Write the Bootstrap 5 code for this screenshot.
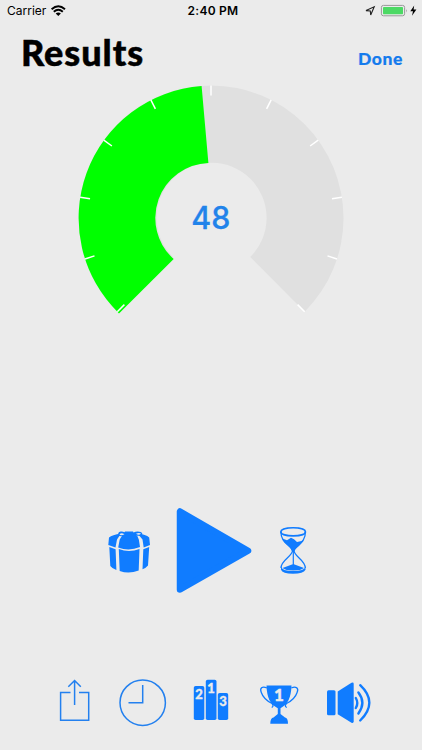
<!DOCTYPE html>
<html lang="en">
<head>
<meta charset="utf-8">
<meta name="viewport" content="width=device-width, initial-scale=1">
<title>Results</title>
<link href="https://cdn.jsdelivr.net/npm/bootstrap@5.3.0/dist/css/bootstrap.min.css" rel="stylesheet">
<style>
body{background:#ebebeb;color:#000;font-family:Inter,sans-serif}
.screen{width:422px;height:750px}
svg{display:block;flex:none}
.status-bar{height:22px;font-size:12px;line-height:22px;padding:0 4px 0 7px}
.status-side{width:150px}
.status-time{font-weight:600;letter-spacing:.25px;padding-left:1px}
.title-bar{height:60px;padding:0 19px 0 21px;font-family:Lato,sans-serif}
.page-title{font-size:36px;line-height:61px;font-weight:900;letter-spacing:.95px;-webkit-text-stroke:.5px #000}
.done-link{font-size:17.5px;line-height:24px;font-weight:900;color:#157bed;padding-top:25px;letter-spacing:.6px;-webkit-text-stroke:.2px #157bed}
.score{font:500 31px/1 Inter,sans-serif;fill:#2183ea;stroke:#2183ea;stroke-width:.3px}
.play-row{margin-top:180px;height:100px;padding-left:100px}
.tool-row{margin-top:70px;height:60px;padding-left:50px}
.blue{color:#107cff}
.digits{font-family:Lato,sans-serif;font-weight:900;fill:#ebebeb;stroke:#ebebeb;stroke-width:.35px;text-anchor:middle}
</style>
</head>
<body>
<main class="screen d-flex flex-column overflow-hidden">
  <header class="status-bar d-flex justify-content-between align-items-center">
    <div class="status-side d-flex align-items-center"><span>Carrier</span>
      <svg class="ms-1" width="16" height="12" viewBox="50 5 16 12" fill="none" stroke="#000" stroke-width="1.9"><path d="M51.6 9.2Q58.3 3.3 65 9.2M53.8 11.7Q58.3 7.7 62.8 11.7"/><path d="M55.7 13.4Q58.3 11.4 60.9 13.4L58.3 16Z" fill="#000" stroke="none"/></svg>
    </div>
    <div class="status-time">2:40 PM</div>
    <div class="status-side d-flex justify-content-end">
      <svg width="54" height="16" viewBox="364 3 54 16"><path d="M366 10.6L374.2 6.8L370.7 15L370.3 10.9Z" fill="none" stroke="#222" stroke-width="1.1"/><rect x="381.4" y="5.4" width="23.2" height="10.4" rx="2" fill="none" stroke="#999"/><rect x="383" y="7" width="20" height="7.3" rx=".7" fill="#4cd964"/><path d="M406 9Q407.6 10.6 406 12.4Z" fill="#999"/><path d="M414.2 5.5L410.3 11.2H413L412 15.7L416.4 9.5H413.6Z" fill="#000"/></svg>
    </div>
  </header>
  <div class="title-bar d-flex justify-content-between">
    <h1 class="page-title m-0">Results</h1>
    <a class="done-link text-decoration-none" href="#">Done</a>
  </div>
  <section class="d-flex justify-content-center">
    <svg width="282" height="238" viewBox="70 82 282 238">
      <path d="M117.3 311.7A132.5 132.5 0 1 1 304.7 311.7L250.2 257A55 55 0 1 0 173 257Z" fill="#e0e0e0"/>
      <path d="M119 313.4A132.5 132.5 0 0 1 201.6 86L208.4 163A55 55 0 0 0 173.7 259Z" fill="#0f0"/>
      <g id="ticks" stroke="#fff" stroke-width="1.5"></g>
      <text class="score" x="210.8" y="229.3" text-anchor="middle" textLength="39" lengthAdjust="spacingAndGlyphs">48</text>
    </svg>
  </section>
  <section class="play-row d-flex blue">
    <svg width="60" height="100" viewBox="100 500 60 100" fill="currentColor">
      <path d="M109 537.5Q112 535 121 533.5L117 539.5 115.5 547.5 108.3 545ZM119.7 539.5Q121.5 535.5 125.5 533L134 533Q137.5 535 138.8 539.5L140 547Q129 551.5 118.2 547.5ZM137.5 533.6Q146 534.5 149.2 537.5L150 545 143.7 547.6 142.5 539.5ZM109.3 547.1L115.6 549.2 116.4 570Q112 568.5 110.3 566ZM118.8 549Q129 553.2 139.5 549L138.7 570.5Q129 574.3 119.7 571ZM143.3 549.3L149.2 547 148 565.5Q146 568 142.5 569.2Z"/>
      <path d="M126 534Q122 537.5 118.5 535.5C117 532 121 530.5 124.5 532.2L125 531.5H133L133.5 532.5C137 530.5 142 531.7 142.3 533.5C142 536.5 137 536.5 133 534Z"/>
      <path d="M119.5 534.6Q121 532.3 124.5 534.2Q121 536 119.5 534.6M136 533.8Q139 532.2 141 533.6Q139 536 136 533.8" fill="#ebebeb"/>
    </svg>
    <svg width="110" height="100" viewBox="160 500 110 100"><path d="M180 511.5V589.5L248 550.7Z" fill="currentColor" stroke="currentColor" stroke-width="6.5" stroke-linejoin="round"/></svg>
    <svg width="50" height="100" viewBox="270 500 50 100">
      <path d="M280.8 532C281 526.3 305.4 526.3 305.5 532C305.4 537.2 281 537.2 280.8 532Z" fill="none" stroke="currentColor" stroke-width="1.7"/>
      <path d="M281 532C280.5 543 291.5 545 292.5 551C291.5 557 281 560 281 568M305.3 532C306 543 295 545 294 551C295 557 305.3 560 305.3 568" fill="none" stroke="currentColor" stroke-width="1.3"/>
      <path d="M282.2 538.5L287 540.2 291 537.8 294 539.2 297 542 304 540.5Q299 546.5 295 549.3L294 552H292.5Q291 547.5 287 545Q283.5 542 282.2 538.5ZM292.7 550H293.9V564.3L304 568Q301 570.5 293 570.5Q285.5 570.5 282.5 568L292.7 564.3Z" fill="currentColor"/>
      <path d="M281 566.5Q282 571 293 571Q304.5 571 305.5 566.5V569.7Q303.5 573.8 293 573.8Q282.5 573.8 281 569.7Z" fill="currentColor"/>
    </svg>
  </section>
  <nav class="tool-row d-flex blue">
    <svg width="60" height="60" viewBox="50 670 60 60" fill="none" stroke="#2380ef" stroke-width="1.5"><path d="M70.5 692.6H60.6V720.2H88.7V692.6H79M74.6 705V680.7M68.3 686.8L74.6 680.5 80.8 686.8"/></svg>
    <svg width="70" height="60" viewBox="110 670 70 60" fill="none" stroke="#2380ef" stroke-width="1.5"><circle cx="142.7" cy="702.7" r="22.7"/><path d="M142.7 685V702.8H128.5"/></svg>
    <svg width="65" height="60" viewBox="180 670 65 60" fill="currentColor"><rect x="193.8" y="686" width="10.5" height="34" rx="1.8"/><rect x="205.8" y="679.7" width="10.7" height="40.3" rx="1.8"/><rect x="217.8" y="693" width="10.4" height="27" rx="1.8"/><g class="digits" font-size="13"><text x="199" y="699">2</text><text x="211" y="693">1</text><text x="223" y="706">3</text></g></svg>
    <svg width="67" height="60" viewBox="245 670 67 60">
      <path d="M266.5 685.5H291.5C291 698 288 704 280.5 708.2V714L285 717.5Q288 718 288 723.7H270.3Q270.3 718 273.5 717.5L277.8 714V708.2C270 704 267 698 266.5 685.5Z" fill="currentColor"/>
      <path d="M267 688C262 685.5 259.5 688.5 261.3 692.5C263.5 699 268 701.5 272 703.5Q274.2 706 271.7 707.5M291.3 688C296 685.5 299 688.5 297.1 692.5C295 699 290.5 701.5 286.5 703.5Q284 706 286.8 707.5" fill="none" stroke="currentColor" stroke-width="1.3"/>
      <text class="digits" x="279" y="701.3" font-size="17">1</text>
    </svg>
    <svg width="65" height="60" viewBox="312 670 65 60" fill="currentColor"><rect x="327" y="690.2" width="8.5" height="25" rx="1.5"/><path d="M337.7 691.5L351.5 682.8Q353.7 682 353.7 684V721.5Q353.5 723.5 351.5 722.7L337.7 714.2Z"/><g fill="none" stroke="currentColor" stroke-width="2.4" stroke-linecap="round"><path d="M355.8 698Q358.8 703 355.8 708M358.4 692.5Q366.3 702.5 358.4 713.5M360.2 685.2Q378.5 702.5 360.2 720.5"/></g></svg>
  </nav>
</main>
<script>
// Eleven scale marks spread over the 270 degree dial
const marks = document.getElementById('ticks');
for (let i = 0; i <= 10; i++) {
  const a = (-135 + 27 * i) * Math.PI / 180;
  const line = document.createElementNS('http://www.w3.org/2000/svg', 'line');
  line.setAttribute('x1', 211 + 122.5 * Math.sin(a));
  line.setAttribute('y1', 218 - 122.5 * Math.cos(a));
  line.setAttribute('x2', 211 + 132.5 * Math.sin(a));
  line.setAttribute('y2', 218 - 132.5 * Math.cos(a));
  marks.appendChild(line);
}
</script>
<script src="https://cdn.jsdelivr.net/npm/bootstrap@5.3.0/dist/js/bootstrap.bundle.min.js"></script>
</body>
</html>
